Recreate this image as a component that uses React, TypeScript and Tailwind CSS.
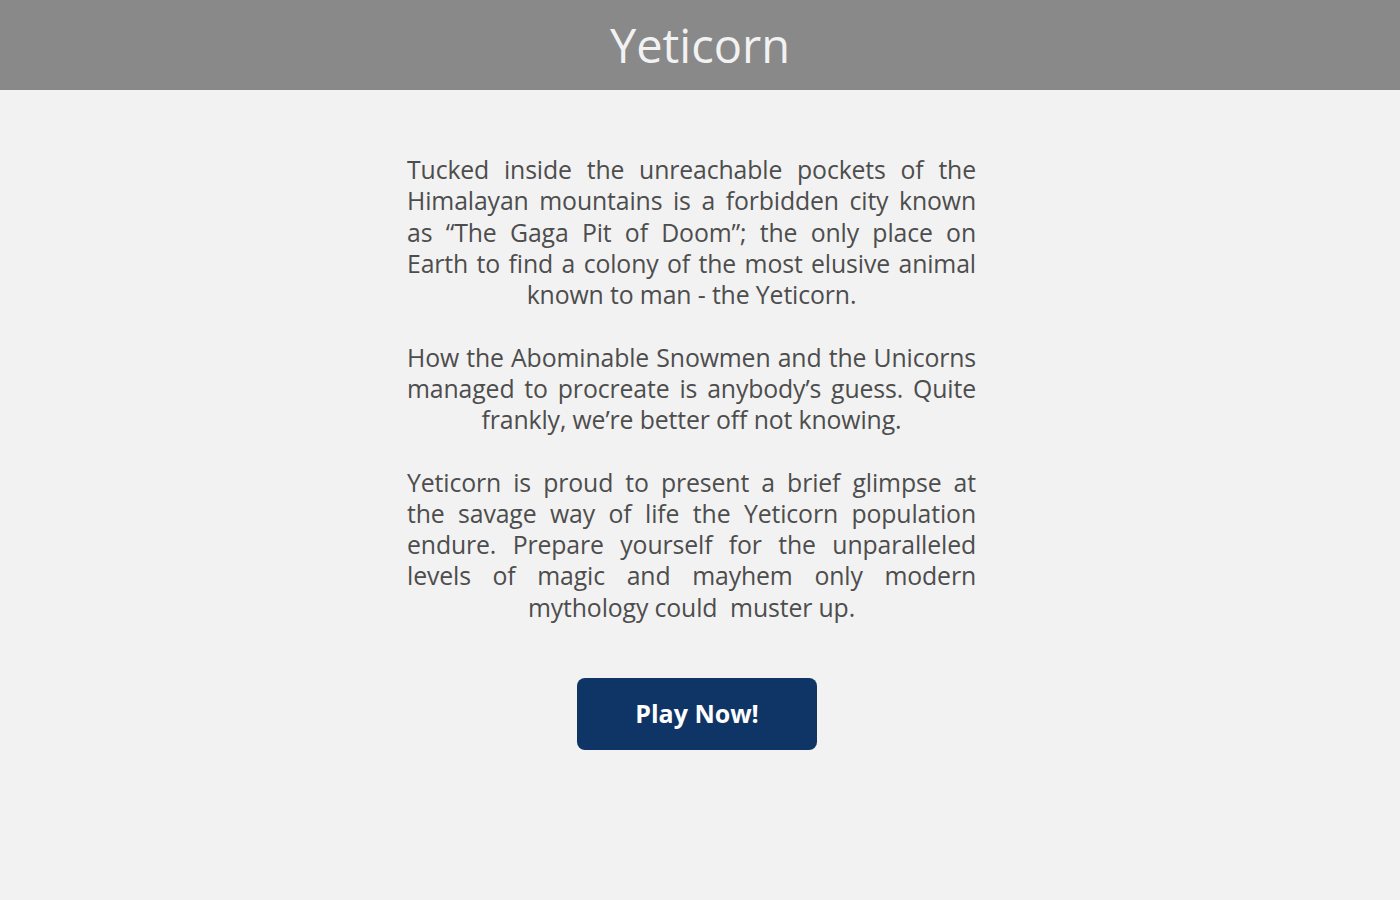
import React from 'react';

const paragraphs: string[][] = [
    [
        'Tucked inside the unreachable pockets of the',
        'Himalayan mountains is a forbidden city known',
        'as \u201cThe Gaga Pit of Doom\u201d; the only place on',
        'Earth to find a colony of the most elusive animal',
        'known to man - the Yeticorn.',
    ],
    [
        'How the Abominable Snowmen and the Unicorns',
        'managed to procreate is anybody\u2019s guess. Quite',
        'frankly, we\u2019re better off not knowing.',
    ],
    [
        'Yeticorn is proud to present a brief glimpse at',
        'the savage way of life the Yeticorn population',
        'endure. Prepare yourself for the unparalleled',
        'levels of magic and mayhem only modern',
        'mythology could\u00a0 muster up.',
    ],
];

export default function App() {
    return (
        <div className="min-h-[900px] bg-[#f2f2f2] font-['Open_Sans',sans-serif]">
            <header className="h-[90px] bg-[#898989] flex items-center justify-center">
                <h1 className="text-[47px] font-normal text-[#f2f2f2] leading-none">Yeticorn</h1>
            </header>

            <main className="flex flex-col items-center pt-[64px]">
                <div className="w-[569px] mr-[17px] text-[24.8px] tracking-[-0.12px] leading-[31.25px] text-[#4d4d4d] space-y-[31.25px]">
                    {paragraphs.map((lines, i) => (
                        <p key={i}>
                            {lines.map((line, j) => (
                                <span
                                    key={j}
                                    className={
                                        j === lines.length - 1
                                            ? 'block text-center whitespace-nowrap'
                                            : 'block text-justify [text-align-last:justify] whitespace-nowrap'
                                    }
                                >
                                    {line}
                                </span>
                            ))}
                        </p>
                    ))}
                </div>

                <button className="mt-[55px] mr-[6px] w-[240px] h-[72px] rounded-lg bg-[#0f3567] text-white text-[25px] font-bold">
                    Play Now!
                </button>
            </main>
        </div>
    );
}
